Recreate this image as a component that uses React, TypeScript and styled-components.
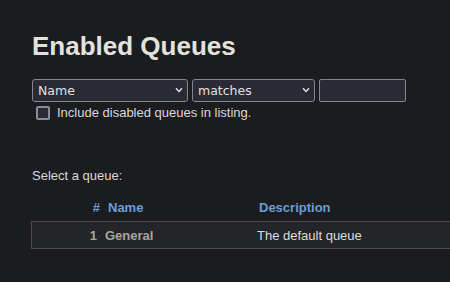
import * as React from 'react';
import styled, { createGlobalStyle } from 'styled-components';

const DocStyle = createGlobalStyle`
  html,
  body {
    background: #1b1c1f;
    color: #d9d9d9;
    font-family: 'Liberation Sans', Arial, sans-serif;
    font-size: 13px;
    margin: 0;
    overflow: hidden;
  }
`;

const Page = styled.div`
  padding: 0 0 0 32px;
`;

const Title = styled.h1`
  color: #e4e2dc;
  font-size: 26px;
  font-weight: bold;
  line-height: 30px;
  margin: 31px 0 18px;
`;

const Filters = styled.div`
  display: flex;
  gap: 4px;
`;

const SelectWrap = styled.div<{ $width: number }>`
  position: relative;
  width: ${p => p.$width}px;
`;

const Select = styled.select`
  appearance: none;
  background: #2a2a35;
  border: 1px solid #85858f;
  border-radius: 3px;
  box-sizing: border-box;
  color: #e0e0e0;
  font-family: 'DejaVu Sans', sans-serif;
  font-size: 12.5px;
  height: 23px;
  margin: 0;
  padding: 0 0 0 5px;
  width: 100%;
`;

const Chevron = styled.svg`
  pointer-events: none;
  position: absolute;
  right: 5px;
  top: 8px;
`;

const TextInput = styled.input`
  background: #2a2a35;
  border: 1px solid #85858f;
  border-radius: 2px;
  box-sizing: border-box;
  height: 23px;
  margin: 0;
  width: 87px;
`;

const CheckRow = styled.label`
  align-items: center;
  display: flex;
  gap: 7px;
  margin: 3px 0 0 4px;
`;

const Box = styled.span`
  background: #2a2a35;
  border: 2px solid #8a8a96;
  border-radius: 2px;
  box-sizing: border-box;
  height: 14px;
  width: 14px;
`;

const Prompt = styled.p`
  line-height: 15px;
  margin: 48px 0 0;
`;

const Table = styled.div`
  margin-top: 12px;
  width: 540px;
`;

const Row = styled.div<{ $head?: boolean }>`
  align-items: center;
  background: ${p => (p.$head ? 'transparent' : '#242528')};
  border: 1px solid ${p => (p.$head ? 'transparent' : '#4b4b4d')};
  box-sizing: border-box;
  display: grid;
  grid-template-columns: 70px 150px 1fr;
  height: ${p => (p.$head ? 24 : 28)}px;
  margin: 0 0 ${p => (p.$head ? 2 : 0)}px -1px;
`;

const Num = styled.span<{ $head?: boolean }>`
  color: ${p => (p.$head ? '#6c9dd3' : '#a9a59e')};
  font-weight: bold;
  padding-right: ${p => (p.$head ? 2 : 5)}px;
  text-align: right;
`;

const Name = styled.span<{ $head?: boolean }>`
  color: ${p => (p.$head ? '#6c9dd3' : '#a9a59e')};
  font-weight: bold;
  padding-left: ${p => (p.$head ? 6 : 3)}px;
`;

const Desc = styled.span<{ $head?: boolean }>`
  color: ${p => (p.$head ? '#6c9dd3' : '#dcdcdc')};
  font-weight: ${p => (p.$head ? 'bold' : 'normal')};
  padding-left: ${p => (p.$head ? 7 : 5)}px;
`;

const Arrow = () => (
  <Chevron width="8" height="6" viewBox="0 0 8 6">
    <path d="M1 1.2 L4 4.4 L7 1.2" fill="none" stroke="#e6e6e6" strokeWidth="1.4" />
  </Chevron>
);

export default function App() {
  return (
    <>
      <DocStyle />
      <Page>
        <Title>Enabled Queues</Title>
        <Filters>
          <SelectWrap $width={156}>
            <Select defaultValue="name">
              <option value="name">Name</option>
              <option value="description">Description</option>
            </Select>
            <Arrow />
          </SelectWrap>
          <SelectWrap $width={123}>
            <Select defaultValue="matches">
              <option value="matches">matches</option>
              <option value="contains">contains</option>
            </Select>
            <Arrow />
          </SelectWrap>
          <TextInput type="text" />
        </Filters>
        <CheckRow>
          <Box />
          Include disabled queues in listing.
        </CheckRow>
        <Prompt>Select a queue:</Prompt>
        <Table>
          <Row $head>
            <Num $head>#</Num>
            <Name $head>Name</Name>
            <Desc $head>Description</Desc>
          </Row>
          <Row>
            <Num>1</Num>
            <Name>General</Name>
            <Desc>The default queue</Desc>
          </Row>
        </Table>
      </Page>
    </>
  );
}
